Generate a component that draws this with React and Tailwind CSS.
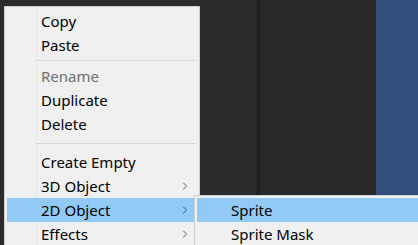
import React from 'react';
import { ChevronRight } from 'lucide-react';

const font = { fontFamily: '"Segoe UI", "Noto Sans", "Open Sans", sans-serif' };

const MenuItem = ({ label, disabled, active, submenu }) => (
    <div className={`relative flex items-center h-6 pl-[34px] pr-[6px] ${active ? 'bg-[#91c9f7]' : ''}`}>
        <span className={`text-[15px] leading-none ${disabled ? 'text-[#6d6d6d]' : 'text-black'}`}>{label}</span>
        {submenu && <ChevronRight className="ml-auto w-3 h-3 text-[#333]" strokeWidth={1.5} />}
    </div>
);

const Separator = ({ tall }) => (
    <div className={`${tall ? 'h-[14px]' : 'h-[7px]'} flex items-center pl-[30px] pr-[2px]`}>
        <div className="h-px w-full bg-[#d7d7d7]" />
    </div>
);

const App = () => {
    return (
        <div className="relative w-[418px] h-[245px] overflow-hidden flex bg-[#2b2b2b]" style={font}>
            <div className="w-[256px] bg-[#2b2b2b]" />
            <div className="w-[6px] flex">
                <div className="w-[2px] bg-[#232323]" />
                <div className="w-[2px] bg-[#1f1f1f]" />
                <div className="w-[2px] bg-[#262626]" />
            </div>
            <div className="w-[114px] bg-[#282828]" />
            <div className="flex-1 bg-[#2f4f78]" />

            {/* Context menu */}
            <div className="absolute left-[4px] top-[6px] w-[196px] h-[260px] bg-[#f0f0f0] border border-[#cfcfcf] pt-[2px] px-[2px]">
                <div className="absolute left-[31px] top-0 bottom-0 w-px bg-[#e6e6e6]" />
                <MenuItem label="Copy" />
                <MenuItem label="Paste" />
                <Separator />
                <MenuItem label="Rename" disabled />
                <MenuItem label="Duplicate" />
                <MenuItem label="Delete" />
                <Separator tall />
                <MenuItem label="Create Empty" />
                <MenuItem label="3D Object" submenu />
                <MenuItem label="2D Object" submenu active />
                <MenuItem label="Effects" submenu />
            </div>

            {/* Submenu */}
            <div className="absolute left-[194px] top-[195px] w-[240px] h-[80px] bg-[#f0f0f0] border border-[#cfcfcf] pt-[2px] px-[2px]">
                <MenuItem label="Sprite" active />
                <MenuItem label="Sprite Mask" />
            </div>
        </div>
    );
};

export default App;
